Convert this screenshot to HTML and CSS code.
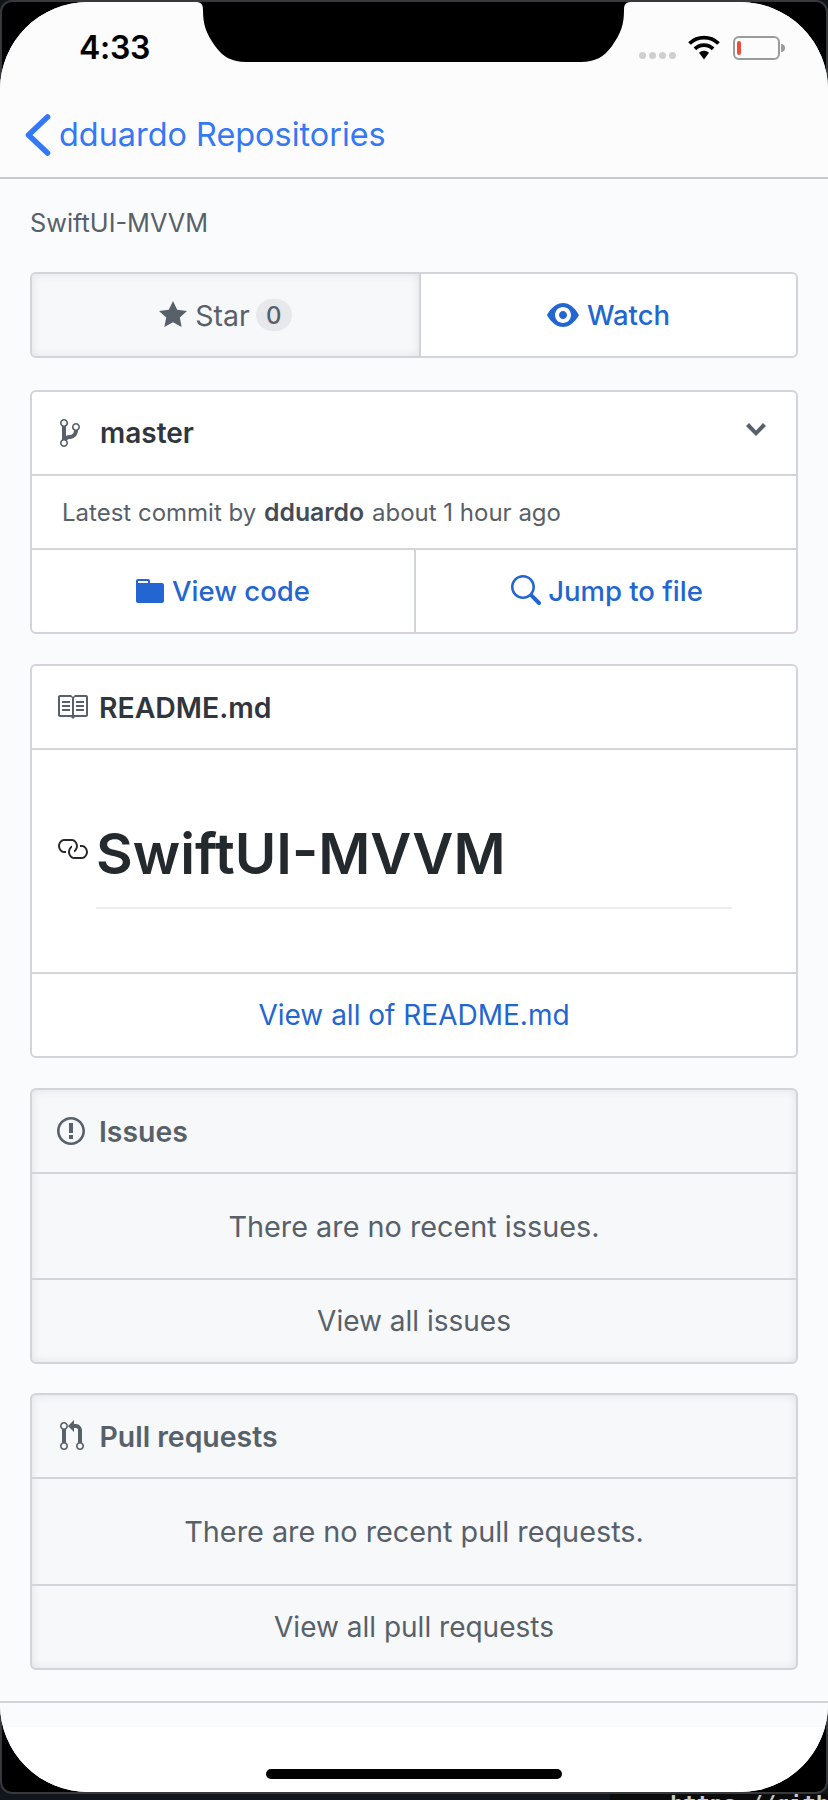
FILE: index.html
```html
<!DOCTYPE html>
<html lang="en">
<head>
<meta charset="utf-8">
<title>SwiftUI-MVVM</title>
<link rel="stylesheet" href="styles.css">
</head>
<body>
<div class="frame">
  <div class="screen">
    <svg class="notch" viewBox="0 0 437 60" aria-hidden="true"><path d="M0 0C5 0 8 1 8 8C8 23 11 31 20 44C28 55 37 60 51 60H386C400 60 409 55 417 44C426 31 429 23 429 8C429 1 432 0 437 0Z"/></svg>
    <header class="top">
      <div class="status">
        <span class="time">4:33</span>
        <div class="status-icons">
          <span class="signal"><i></i><i></i><i></i><i></i></span>
          <svg class="wifi" viewBox="0 0 32 25" aria-hidden="true"><path d="M1.5 8.5A20.7 20.7 0 0 1 30.5 8.5M6.9 13.9A13 13 0 0 1 25.1 13.9" fill="none" stroke="#000" stroke-width="3.8"/><path d="M11 17.8A7 7 0 0 1 21 17.8L16 24.5Z"/></svg>
          <span class="battery"><span class="battery-level"></span></span>
        </div>
      </div>
      <nav class="navrow">
        <svg class="back" viewBox="0 0 26 42" aria-hidden="true"><path d="M22.5 3L3.5 21L22.5 39" fill="none" stroke="#3478f6" stroke-width="5.6" stroke-linecap="round" stroke-linejoin="round"/></svg>
        <span class="back-label">dduardo Repositories</span>
      </nav>
    </header>
    <main class="page">
      <p class="repo-name">SwiftUI-MVVM</p>

      <section class="card card-first">
        <div class="row split split-star">
          <div class="cell cell-muted">
            <svg class="ico ico-star" viewBox="0 0 14 16" aria-hidden="true"><path fill-rule="evenodd" d="M14 6l-4.9-.64L7 1 4.9 5.36 0 6l3.6 3.26L2.67 14 7 11.67 11.33 14l-.93-4.74L14 6z"/></svg>
            <span class="star-label">Star</span>
            <span class="counter">0</span>
          </div>
          <div class="cell link">
            <svg class="ico ico-eye" viewBox="0 0 16 16" aria-hidden="true"><path fill-rule="evenodd" d="M8.06 2C3 2 0 8 0 8s3 6 8.06 6C13 14 16 8 16 8s-3-6-7.94-6zM8 12c-2.2 0-4-1.78-4-4 0-2.2 1.8-4 4-4 2.22 0 4 1.8 4 4 0 2.22-1.78 4-4 4zm2-4c0 1.11-.89 2-2 2-1.11 0-2-.89-2-2 0-1.11.89-2 2-2 1.11 0 2 .89 2 2z"/></svg>
            <span>Watch</span>
          </div>
        </div>
      </section>

      <section class="card">
        <div class="row row-head branch-row">
          <svg class="ico ico-branch" viewBox="0 0 10 16" aria-hidden="true"><path fill-rule="evenodd" d="M10 5c0-1.11-.89-2-2-2a1.993 1.993 0 0 0-1 3.72v.3c-.02.52-.23.98-.63 1.38-.4.4-.86.61-1.38.63-.83.02-1.48.16-2 .45V4.72a1.993 1.993 0 0 0-1-3.72C.88 1 0 1.89 0 3a2 2 0 0 0 1 1.72v6.56c-.59.35-1 .99-1 1.72 0 1.11.89 2 2 2 1.11 0 2-.89 2-2 0-.53-.2-1-.53-1.36.09-.06.48-.41.59-.47.25-.11.56-.17.94-.17 1.05-.05 1.95-.45 2.75-1.25S8.95 7.77 9 6.73h-.02C9.59 6.37 10 5.73 10 5zM2 1.8c.66 0 1.2.55 1.2 1.2 0 .65-.55 1.2-1.2 1.2C1.35 4.2.8 3.65.8 3c0-.65.55-1.2 1.2-1.2zm0 12.41c-.66 0-1.2-.55-1.2-1.2 0-.65.55-1.2 1.2-1.2.65 0 1.2.55 1.2 1.2 0 .65-.55 1.2-1.2 1.2zm6-8c-.66 0-1.2-.55-1.2-1.2 0-.65.55-1.2 1.2-1.2.65 0 1.2.55 1.2 1.2 0 .65-.55 1.2-1.2 1.2z"/></svg>
          <span class="branch">master</span>
          <svg class="ico ico-chevron" viewBox="0 0 10 16" aria-hidden="true"><path fill-rule="evenodd" d="M5 11L0 6l1.5-1.5L5 8.25 8.5 4.5 10 6l-5 5z"/></svg>
        </div>
        <div class="row row-commit commit">Latest commit by <b>dduardo</b> about 1 hour ago</div>
        <div class="row row-foot split split-code">
          <div class="cell link">
            <svg class="ico ico-folder" viewBox="0 0 14 16" aria-hidden="true"><path fill-rule="evenodd" d="M13 4H7V3c0-.66-.31-1-1-1H1c-.55 0-1 .45-1 1v10c0 .55.45 1 1 1h12c.55 0 1-.45 1-1V5c0-.55-.45-1-1-1zM6 4H1V3h5v1z"/></svg>
            <span>View code</span>
          </div>
          <div class="cell link">
            <svg class="ico ico-search" viewBox="0 0 16 16" aria-hidden="true"><path fill-rule="evenodd" d="M15.7 13.3l-3.81-3.83A5.93 5.93 0 0 0 13 6c0-3.31-2.69-6-6-6S1 2.69 1 6s2.69 6 6 6c1.3 0 2.48-.41 3.47-1.11l3.83 3.81c.19.2.45.3.7.3.25 0 .52-.09.7-.3a.996.996 0 0 0 0-1.41v.01zM7 10.7c-2.59 0-4.7-2.11-4.7-4.7 0-2.59 2.11-4.7 4.7-4.7 2.59 0 4.7 2.11 4.7 4.7 0 2.59-2.11 4.7-4.7 4.7z"/></svg>
            <span>Jump to file</span>
          </div>
        </div>
      </section>

      <section class="card">
        <div class="row row-head card-title">
          <svg class="ico ico-16" viewBox="0 0 16 16" aria-hidden="true"><path fill-rule="evenodd" d="M3 5h4v1H3V5zm0 3h4V7H3v1zm0 2h4V9H3v1zm11-5h-4v1h4V5zm0 2h-4v1h4V7zm0 2h-4v1h4V9zm2-6v9c0 .55-.45 1-1 1H9.5l-1 1-1-1H2c-.55 0-1-.45-1-1V3c0-.55.45-1 1-1h5.5l1 1 1-1H15c.55 0 1 .45 1 1zm-8 .5L7.5 3H2v9h6V3.5zm7-.5H9.5l-.5.5V12h6V3z"/></svg>
          <span>README.md</span>
        </div>
        <div class="row readme">
          <svg class="ico ico-16 ico-link" viewBox="0 0 16 16" aria-hidden="true"><path fill-rule="evenodd" d="M4 9h1v1H4c-1.5 0-3-1.69-3-3.5S2.55 3 4 3h4c1.45 0 3 1.69 3 3.5 0 1.41-.91 2.72-2 3.25V8.59c.58-.45 1-1.27 1-2.09C10 5.22 8.98 4 8 4H4c-.98 0-2 1.22-2 2.5S3 9 4 9zm9-3h-1v1h1c1 0 2 1.22 2 2.5S13.98 12 13 12H9c-.98 0-2-1.22-2-2.5 0-.83.42-1.64 1-2.09V6.25c-1.09.53-2 1.84-2 3.25C6 11.31 7.55 13 9 13h4c1.45 0 3-1.69 3-3.5S14.5 6 13 6z"/></svg>
          <h1 class="readme-title">SwiftUI-MVVM</h1>
        </div>
        <div class="row row-foot foot link">View all of README.md</div>
      </section>

      <section class="card card-muted card-tight">
        <div class="row row-head card-title">
          <svg class="ico ico-issue" viewBox="0 0 14 16" aria-hidden="true"><path fill-rule="evenodd" d="M7 2.3c3.14 0 5.7 2.56 5.7 5.7s-2.56 5.7-5.7 5.7A5.71 5.71 0 0 1 1.3 8c0-3.14 2.56-5.7 5.7-5.7zM7 1C3.14 1 0 4.14 0 8s3.14 7 7 7 7-3.14 7-7-3.14-7-7-7zm1 3H6v5h2V4zm0 6H6v2h2v-2z"/></svg>
          <span>Issues</span>
        </div>
        <div class="row row-empty empty">There are no recent issues.</div>
        <div class="row row-foot foot">View all issues</div>
      </section>

      <section class="card card-muted card-last">
        <div class="row row-head card-title">
          <svg class="ico ico-pr" viewBox="0 0 12 16" aria-hidden="true"><path fill-rule="evenodd" d="M11 11.28V5c-.03-.78-.34-1.47-.94-2.06C9.46 2.35 8.78 2.03 8 2H7V0L4 3l3 3V4h1c.27.02.48.11.69.31.21.2.3.42.31.69v6.28A1.993 1.993 0 0 0 10 15a1.993 1.993 0 0 0 1-3.72zm-1 2.92c-.66 0-1.2-.55-1.2-1.2 0-.65.55-1.2 1.2-1.2.65 0 1.2.55 1.2 1.2 0 .65-.55 1.2-1.2 1.2zM4 3c0-1.11-.89-2-2-2a1.993 1.993 0 0 0-1 3.72v6.56A1.993 1.993 0 0 0 2 15a1.993 1.993 0 0 0 1-3.72V4.72c.59-.34 1-.98 1-1.72zm-.8 10c0 .66-.55 1.2-1.2 1.2-.65 0-1.2-.55-1.2-1.2 0-.65.55-1.2 1.2-1.2.65 0 1.2.55 1.2 1.2zM2 4.2C1.34 4.2.8 3.65.8 3c0-.65.55-1.2 1.2-1.2.65 0 1.2.55 1.2 1.2 0 .65-.55 1.2-1.2 1.2z"/></svg>
          <span>Pull requests</span>
        </div>
        <div class="row row-empty empty">There are no recent pull requests.</div>
        <div class="row row-foot foot">View all pull requests</div>
      </section>
    </main>
    <div class="page-end"></div>
    <div class="home-area"><span class="home-bar"></span></div>
  </div>
</div>
<div class="caption"><span>https://gith</span></div>
</body>
</html>
```

FILE: styles.css
```css
* { box-sizing: border-box; }
html, body { margin: 0; padding: 0; height: 1800px; overflow: hidden; }
body { background: #0f1419; font-family: Inter, "Liberation Sans", sans-serif; color: #24292e; }

.frame { height: 1794px; background: #000; border: 2px solid #36383b; border-radius: 12px; }
.screen { position: relative; height: 1790px; margin: 0 -2px; background: #fff; border-radius: 88px; overflow: hidden; display: flex; flex-direction: column; }
.notch { position: absolute; top: 0; left: 195px; width: 437px; height: 60px; fill: #000; }

.top { height: 177px; flex: none; background: #fcfcfc; border-bottom: 2px solid #c9cacc; }
.status { height: 90px; padding: 27px 48px 0 79px; display: flex; justify-content: space-between; align-items: flex-start; }
.time { font-size: 32px; line-height: 38px; font-weight: 600; color: #000; letter-spacing: -.3px; }
.status-icons { display: flex; align-items: center; padding-top: 6px; }
.signal { display: flex; gap: 3px; margin-right: 12px; margin-top: 16px; }
.signal i { width: 7px; height: 7px; border-radius: 50%; background: #cfcfcf; }
.wifi { width: 32px; height: 25px; margin-right: 13px; }
.battery { position: relative; width: 47px; height: 24px; border: 2px solid #9b9b9b; border-radius: 6px; padding: 3px 2px; display: block; }
.battery::after { content: ""; position: absolute; right: -7px; top: 6px; width: 4px; height: 8px; background: #9b9b9b; border-radius: 0 4px 4px 0; }
.battery-level { display: block; width: 4px; height: 14px; background: #f04b3a; border-radius: 2px; }

.navrow { height: 85px; display: flex; align-items: center; padding-left: 25px; gap: 8px; }
.back { width: 26px; height: 42px; flex: none; }
.back-label { font-size: 32.4px; line-height: 40px; color: #3478f6; }

.page { flex: 1; background: #fafbfc; padding: 0 30px 31px; }
.repo-name { margin: 0; padding: 29px 0 0; height: 93px; font-size: 25.3px; line-height: 30px; color: #586069; }

.card { margin-bottom: 30px; border: 2px solid #d1d5da; border-radius: 6px; background: #fff; overflow: hidden; }
.card-first { margin-bottom: 32px; }
.card-tight { margin-bottom: 29px; }
.card-last { margin-bottom: 0; }
.card-muted { background: #f6f8fa; box-shadow: inset 0 0 10px rgba(27, 31, 35, .1); }

.row { display: flex; align-items: center; border-top: 2px solid #d1d5da; }
.row:first-child { border-top: 0; }
.row-head { height: 82px; }
.row-commit { height: 74px; }
.row-foot { height: 84px; }
.row-empty { height: 106px; }
.card-last .row-empty { height: 107px; }

.split { height: 82px; align-items: stretch; display: grid; }
.split-star { grid-template-columns: 387px 1fr; }
.split-code { grid-template-columns: 382px 1fr; height: 84px; }
.cell { display: flex; align-items: center; justify-content: center; font-size: 27.5px; font-weight: 500; }
.cell + .cell { border-left: 2px solid #d1d5da; }
.cell-muted { background: #f6f8fa; color: #586069; box-shadow: inset 0 0 10px rgba(27, 31, 35, .1); font-size: 28.5px; font-weight: 400; }
.link { color: #2366d1; }

.ico { fill: currentColor; flex: none; display: block; }
.ico-star { width: 28px; height: 32px; margin-right: 8px; color: #586069; }
.star-label { margin-right: 6px; }
.counter { width: 36px; height: 32px; border-radius: 16px; background: #e6e8eb; display: flex; align-items: center; justify-content: center; font-size: 24px; font-weight: 500; color: #586069; }
.ico-eye { width: 32px; height: 32px; margin-right: 8px; }
.ico-folder { width: 28px; height: 32px; margin-right: 8px; }
.ico-search { width: 32px; height: 32px; margin-right: 7px; }

.branch-row { padding: 0 30px 0 28px; color: #586069; }
.ico-branch { width: 20px; height: 32px; margin-right: 20px; }
.branch { flex: 1; font-size: 28px; font-weight: 600; color: #2f363d; }
.ico-chevron { width: 20px; height: 32px; margin-top: -6px; }
.commit { padding-left: 30px; font-size: 24px; color: #586069; display: block; line-height: 72px; }
.commit b { font-size: 24.8px; font-weight: 600; margin: 0 1px; color: #444d56; }

.card-title { padding-left: 24px; font-size: 28.4px; font-weight: 600; color: #2f363d; gap: 11px; }
.card-title .ico { color: #586069; }
.card-muted .card-title { color: #586069; }
.ico-16 { width: 32px; height: 32px; }
.ico-issue { width: 28px; height: 32px; margin: 0 3px 0 1px; }
.ico-pr { width: 24px; height: 32px; margin: 0 4.5px 0 4px; }

.readme { height: 224px; padding: 0 64px 0 24px; align-items: flex-start; gap: 8px; }
.ico-link { margin-top: 83px; }
.card .ico-link { color: #24292e; }
.readme-title { flex: 1; margin: 69px 0 0; padding-bottom: 18px; border-bottom: 2px solid #eaecef; font-size: 56.5px; line-height: 70px; font-weight: 600; color: #24292e; }

.empty, .foot { justify-content: center; font-size: 28px; color: #586069; }
.empty { font-size: 28.8px; }
.foot.link { color: #2366d1; }

.page-end { flex: none; height: 26px; background: #fafbfc; border-top: 2px solid #d1d5da; }
.home-area { flex: none; height: 66px; background: #fff; display: flex; justify-content: center; padding-top: 42px; }
.home-bar { width: 296px; height: 10px; border-radius: 5px; background: #000; }

.caption { height: 6px; overflow: hidden; display: flex; justify-content: flex-end; background: linear-gradient(90deg, #10161b 0, #10161b 610px, #0b0b0c 610px); }
.caption span { width: 158px; overflow: hidden; white-space: nowrap; font-family: "DejaVu Sans Mono", monospace; font-weight: 700; font-size: 22px; line-height: 20px; color: #c9c9c9; }
```
